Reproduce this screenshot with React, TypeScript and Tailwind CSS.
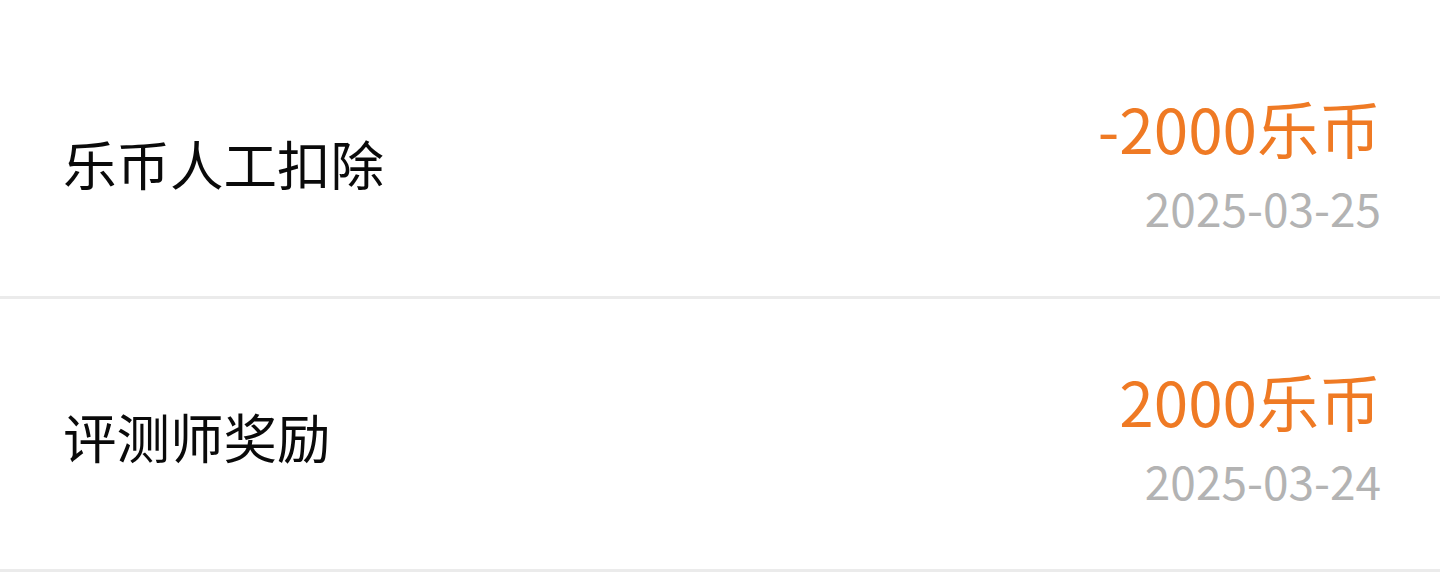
import React from "react";

type Record = {
  title: string;
  amount: string;
  date: string;
};

const records: Record[] = [
  { title: "乐币人工扣除", amount: "-2000乐币", date: "2025-03-25" },
  { title: "评测师奖励", amount: "2000乐币", date: "2025-03-24" },
];

function RecordRow({ item }: { item: Record }) {
  return (
    <div className="flex h-[273px] items-center justify-between border-b-[3px] border-[#ebebeb] pt-[4px] pl-[63px] pr-[59px]">
      <span className="text-[53.5px] leading-none text-[#0a0a0a]">{item.title}</span>
      <div className="flex flex-col items-end">
        <span className="text-[62px] leading-none text-[#ef7a24]">{item.amount}</span>
        <span className="mt-[26px] text-[46px] leading-none text-[#b3b3b3]">{item.date}</span>
      </div>
    </div>
  );
}

export default function App() {
  return (
    <div
      className="min-h-screen w-full bg-white pt-[26px]"
      style={{ fontFamily: '"Noto Sans CJK SC", "Noto Sans", sans-serif' }}
    >
      {records.map((item) => (
        <RecordRow key={item.date} item={item} />
      ))}
    </div>
  );
}
